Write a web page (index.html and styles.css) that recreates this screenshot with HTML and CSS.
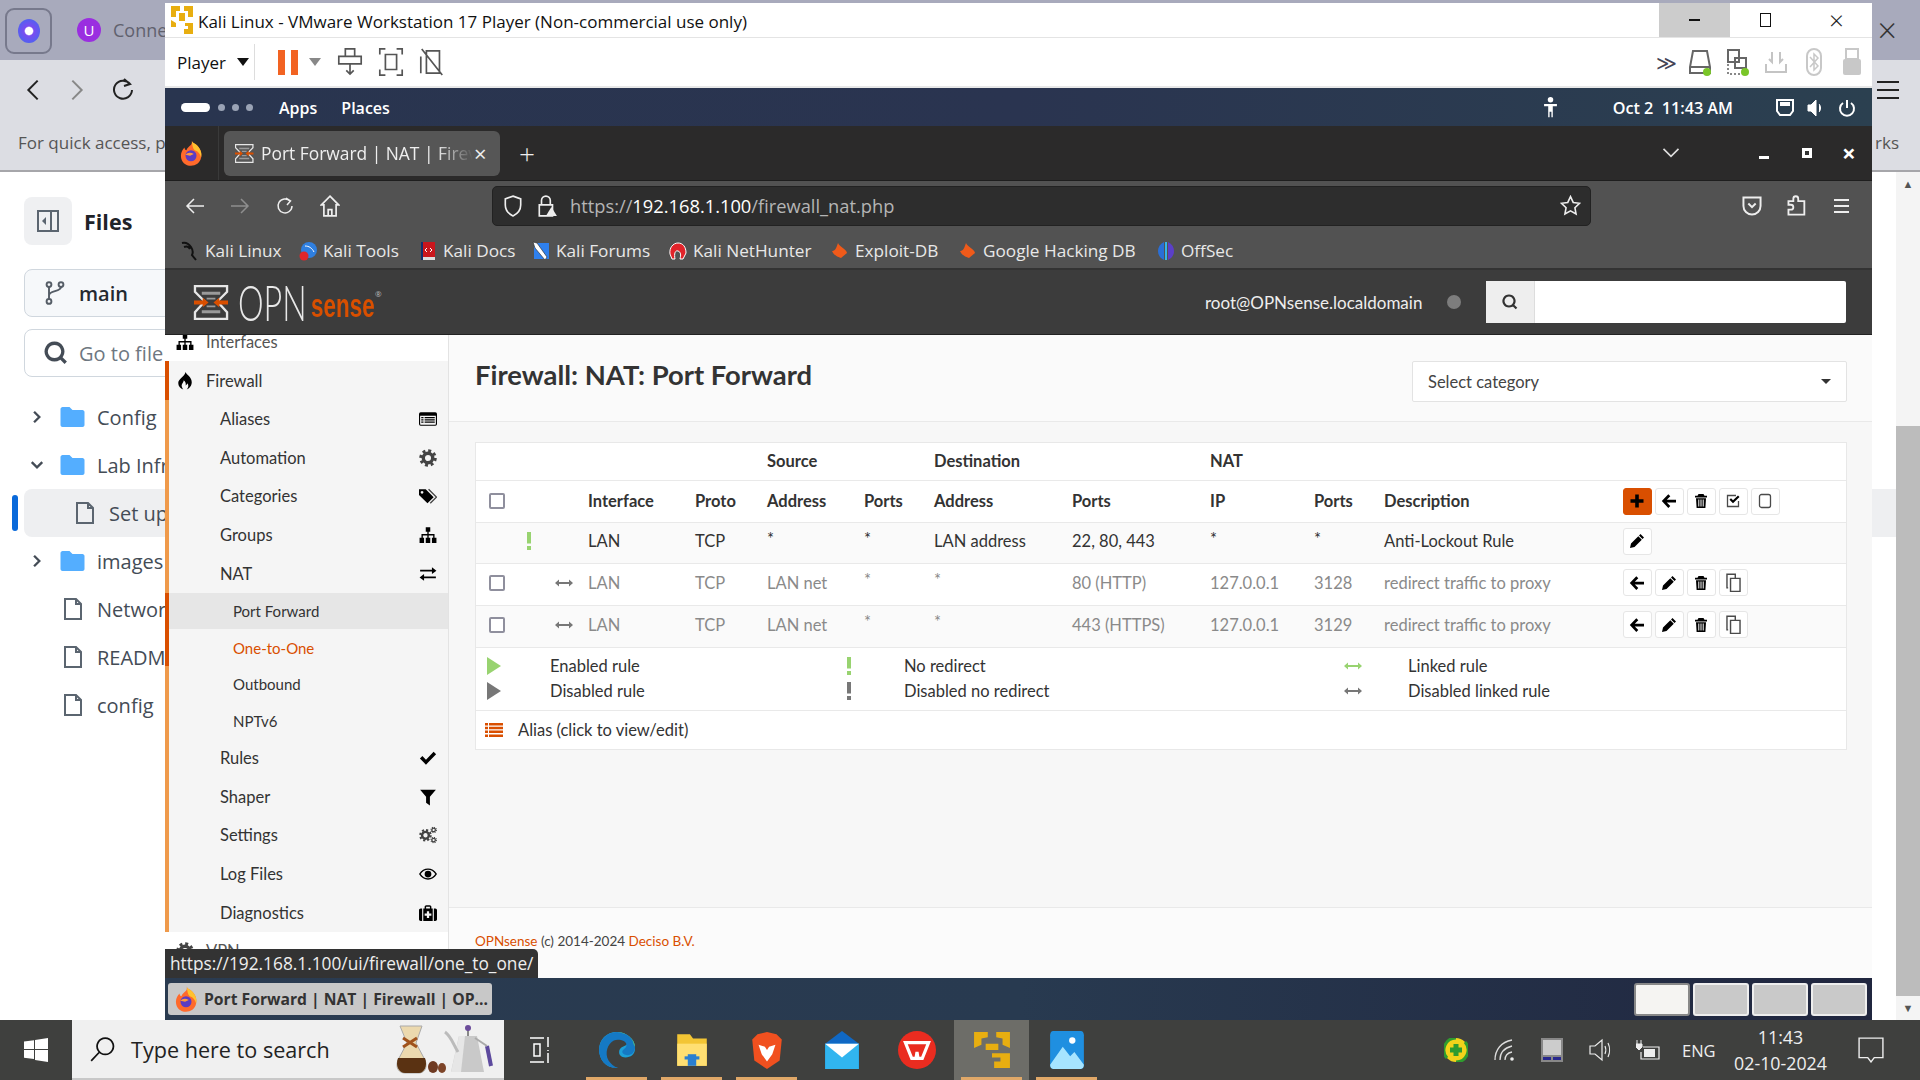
FILE: index.html
```html
<!DOCTYPE html>
<html lang="en">
<head>
    <meta charset="UTF-8">
    <title>Kali Linux - VMware Workstation 17 Player</title>
    <link rel="stylesheet" href="styles.css">
</head>
<body>
<svg class="sprite" xmlns="http://www.w3.org/2000/svg">
    <symbol id="i-sitemap" viewBox="0 0 16 16"><path d="M6 1h4v4H8.600v2.200h5.200v3.300H15.500V15h-4v-4.500h1.100V8.400H8.600v2.100H10V15H6v-4.500h1.400V8.400H3.400v2.100h1.100V15h-4v-4.500h1.700V7.200h5.200V5H6z"/></symbol>
    <symbol id="i-fire" viewBox="0 0 16 16"><path fill-rule="evenodd" d="M8.500 0c.6 2.300 5.500 4.200 5.500 9 0 3.200-2.200 5.600-4.500 6.500 1.600-1.500 2-3.500.6-5.400-.2 1-.8 1.500-1.500 1.800.4-1.800-.3-3.500-1.800-4.500.2 2-2.300 3.300-1.600 5.700.2.900.7 1.700 1.300 2.400C3.700 14.600 2 12.500 2 9.800 2 6 7.500 4.500 8.500 0z"/></symbol>
    <symbol id="i-gear" viewBox="0 0 16 16"><circle cx="8" cy="8" r="4.200" fill="none" stroke="currentColor" stroke-width="3"/><circle cx="8" cy="8" r="6.500" fill="none" stroke="currentColor" stroke-width="2.600" stroke-dasharray="2.600 2.500"/></symbol>
    <symbol id="i-tags" viewBox="0 0 16 16"><path fill-rule="evenodd" d="M0 2h6l7 7-5.500 5.500L0 7z M2.700 3.500a1.200 1.200 0 1 0 .01 0z"/><path d="M8.500 2l7 7-5.500 5.500" fill="none" stroke="currentColor" stroke-width="1.200"/></symbol>
    <symbol id="i-listalt" viewBox="0 0 16 16"><path fill-rule="evenodd" d="M1.500 2h13A1.500 1.500 0 0 1 16 3.500v9a1.500 1.500 0 0 1-1.500 1.500h-13A1.500 1.500 0 0 1 0 12.500v-9A1.500 1.500 0 0 1 1.500 2z M1 5v7.500c0 .3.2.5.500.5h13c.3 0 .5-.2.5-.5V5z"/><path d="M2 6.300h2v1H2zM5 6.300h9v1H5zM2 8.300h2v1H2zM5 8.300h9v1H5zM2 10.300h2v1H2zM5 10.300h9v1H5z"/></symbol>
    <symbol id="i-exchange" viewBox="0 0 16 16"><path d="M1 4.300h10.500V2L15.500 5l-4 3V5.800H1z M15 10.200H4.500V8L.5 11l4 3v-2.300H15z"/></symbol>
    <symbol id="i-check" viewBox="0 0 16 16"><path d="M.8 8.500l2.200-2.200 3.200 3.200 6.800-7 2.200 2.200-9 9.200z"/></symbol>
    <symbol id="i-filter" viewBox="0 0 16 16"><path d="M1 1.500h14l-5.300 6.200v7.800l-3.400-2.500V7.700z"/></symbol>
    <symbol id="i-cogs" viewBox="0 0 16 16"><use href="#i-gear" x="0" y="2.500" width="11.500" height="11.500"/><use href="#i-gear" x="10" y="0.500" width="6" height="6"/><use href="#i-gear" x="10" y="9.500" width="6" height="6"/></symbol>
    <symbol id="i-eye" viewBox="0 0 16 16"><path fill-rule="evenodd" d="M0 8c2-3.500 5-5 8-5s6 1.500 8 5c-2 3.500-5 5-8 5s-6-1.500-8-5z M1.500 8c1.500 2.500 4 3.800 6.500 3.800S13 10.500 14.500 8C13 5.500 10.500 4.200 8 4.200S3 5.500 1.500 8z"/><circle cx="8" cy="8" r="3"/></symbol>
    <symbol id="i-medkit" viewBox="0 0 16 16"><path fill-rule="evenodd" d="M5 4V2.500C5 1.700 5.700 1 6.500 1h3c.8 0 1.500.7 1.500 1.500V4h3.500c.8 0 1.500.7 1.500 1.500v8c0 .8-.7 1.500-1.500 1.500h-13C.7 15 0 14.300 0 13.500v-8C0 4.700.7 4 1.500 4z M6.300 4h3.400V2.400H6.300z M2.800 4v11h1V4z M12.200 4v11h1V4z M7 6.500v2H5v2h2v2h2v-2h2v-2H9v-2z"/></symbol>
    <symbol id="i-left" viewBox="0 0 16 16"><path d="M7.300 1.300l2 2L5.800 6.700H15v2.800H5.800l3.500 3.400-2 2L.8 8.100z"/></symbol>
    <symbol id="i-trash" viewBox="0 0 16 16"><path fill-rule="evenodd" d="M5.500 1h5l1 1.800h2.500V4.500H2V2.800h2.500z M3 5.300h10l-.6 9.700H3.600z M5.300 6.500v7h1v-7z M7.500 6.500v7h1v-7z M9.700 6.500v7h1v-7z"/></symbol>
    <symbol id="i-pencil" viewBox="0 0 16 16"><path d="M11.500 1l3.500 3.500-1.500 1.500L10 2.500z M9.300 3.200l3.500 3.500-7.300 7.300L1 15l1-4.500z"/></symbol>
    <symbol id="i-copy" viewBox="0 0 16 16"><path d="M5.500 4.500h8v11h-8zM3.500 12.500H2.500V1h7v3.500" fill="none" stroke="currentColor" stroke-width="1.200"/></symbol>
    <symbol id="i-plus" viewBox="0 0 16 16"><path d="M6.200 1.500h3.600v4.700h4.700v3.600H9.800v4.700H6.200V9.800H1.500V6.200h4.700z"/></symbol>
    <symbol id="i-checksq" viewBox="0 0 16 16"><path d="M13.500 8v5.500h-11v-11H11" fill="none" stroke="currentColor" stroke-width="1.300"/><path d="M4.500 6.800l1.500-1.500 2 2L13 2.500l1.500 1.500L8 10.300z"/></symbol>
    <symbol id="i-square" viewBox="0 0 16 16"><rect x="2.500" y="1.500" width="11" height="13" rx="2" fill="none" stroke="currentColor" stroke-width="1.300"/></symbol>
    <symbol id="i-both" viewBox="0 0 18 10"><path d="M0 5l4-3.500v2.500h10V1.500L18 5l-4 3.500V6H4v2.500z"/></symbol>
    <symbol id="i-bang" viewBox="0 0 6 18"><path d="M1 0h4v11.500H1zM1 14h4v4H1z"/></symbol>
    <symbol id="i-play" viewBox="0 0 14 18"><path d="M0 0l14 9L0 18z"/></symbol>
    <symbol id="i-alias" viewBox="0 0 18 16"><path d="M0 1h3v2.500H0zM4 1h14v2.500H4zM0 4.800h3v2.500H0zM4 4.800h14v2.500H4zM0 8.600h3v2.500H0zM4 8.600h14v2.500H4zM0 12.400h3v2.500H0zM4 12.400h14v2.500H4z"/></symbol>
    <symbol id="i-search" viewBox="0 0 16 16"><path d="M7 1.500a5.500 5.500 0 1 1-.01 0zM10.700 10.700L14.500 14.500" fill="none" stroke="currentColor" stroke-width="2.200"/></symbol>
    <symbol id="i-file" viewBox="0 0 20 24"><path d="M2 2h11l5 5v15H2zM13 2v5h5" fill="none" stroke="currentColor" stroke-width="2"/></symbol>
    <symbol id="i-folder" viewBox="0 0 24 20"><path d="M2 0h7l3 3h10c1 0 2 1 2 2v13c0 1-1 2-2 2H2c-1 0-2-1-2-2V2C0 1 1 0 2 0z"/></symbol>
    <symbol id="i-chevron" viewBox="0 0 12 12"><path d="M3.500 1.500L8 6l-4.500 4.500" fill="none" stroke="currentColor" stroke-width="2"/></symbol>
    <symbol id="i-opn" viewBox="0 0 36 36"><path d="M1 1h33v6L24 17l10 11v7H1v-7l10-11L1 7z" fill="none" stroke="#e6e6e6" stroke-width="2.400"/><path d="M8 7h19v3H8zM13 13h9v2H13zM13 21h9v2H13zM8 26h19v3H8z" fill="#9a9a9a"/><path d="M0 16h9v-3l6 5-6 5v-3H0zM35 16h-9v-3l-6 5 6 5v-3h9z" fill="#d94f00"/></symbol>
    <symbol id="i-ffox" viewBox="0 0 24 28"><path d="M13 0c0 3 3 3 6 6 4 4 5 9 4 13-1 6-6 9-11 9C6 28 1 24 1 17c0-4 2-7 4-9 0 2 1 3 2 3 1-3 3-4 5-6 1-1 1-3 1-5z" fill="#ff6a2b"/><path d="M13 0c0 3 3 3 6 6 4 4 5 9 4 13-1-4-3-7-7-8-2-2-3-6-3-11z" fill="#ffc22e"/><circle cx="12" cy="17" r="6" fill="#5b3cc4"/><path d="M6 16c2-3 6-3 9-1l-4 2z" fill="#ff9a3c"/></symbol>
</svg>

<div class="desktop">
    <div class="screen">

        <!-- browser behind the vm -->
        <div class="host-browser">
            <div class="host-tabs">
                <span class="host-app"><span class="host-app-dot"></span></span>
                <span class="host-ext">U</span>
                <span class="host-tabname">Conne</span>
                <span class="host-close">×</span>
            </div>
            <div class="host-tools">
                <div class="host-nav">
                    <svg class="host-arrow flip" viewBox="0 0 12 18"><path d="M2 1l8 8-8 8"/></svg>
                    <svg class="host-arrow muted" viewBox="0 0 12 18"><path d="M2 1l8 8-8 8"/></svg>
                    <svg class="host-reload" viewBox="0 0 22 24"><path d="M18 6a9 9 0 1 0 2 6M12 1l6 5-6 2"/></svg>
                    <span class="host-burger"></span>
                </div>
                <div class="host-hint"><span>For quick access, p</span><span class="host-rks">rks</span></div>
            </div>
            <div class="host-page">
                <div class="tree">
                    <div class="tree-head">
                        <span class="tree-toggle"><svg class="tree-toggle-in" viewBox="0 0 24 24"><path d="M2 2h20v20H2zM15 2v20" fill="none" stroke="#5b6570" stroke-width="2"/><path d="M10 8v8l-4-4z" fill="#5b6570"/></svg></span>
                        <span class="tree-title">Files</span>
                    </div>
                    <div class="tree-box tree-branch"><svg class="branch-ic" viewBox="0 0 16 20"><circle cx="3" cy="3" r="2"/><circle cx="3" cy="17" r="2"/><circle cx="13" cy="3" r="2"/><path d="M3 5v10M13 5c0 4-10 3-10 7"/></svg>main</div>
                    <div class="tree-box tree-find"><svg class="find-ic"><use href="#i-search"/></svg>Go to file</div>
                    <ul class="tree-list">
                        <li class="tree-row"><svg class="tree-chev"><use href="#i-chevron"/></svg><svg class="tree-folder"><use href="#i-folder"/></svg>Config</li>
                        <li class="tree-row"><svg class="tree-chev down"><use href="#i-chevron"/></svg><svg class="tree-folder"><use href="#i-folder"/></svg>Lab Infra</li>
                        <li class="tree-row tree-current"><svg class="tree-file"><use href="#i-file"/></svg>Set up</li>
                        <li class="tree-row"><svg class="tree-chev"><use href="#i-chevron"/></svg><svg class="tree-folder"><use href="#i-folder"/></svg>images</li>
                        <li class="tree-row tree-plain"><svg class="tree-file"><use href="#i-file"/></svg>Network</li>
                        <li class="tree-row tree-plain"><svg class="tree-file"><use href="#i-file"/></svg>README</li>
                        <li class="tree-row tree-plain"><svg class="tree-file"><use href="#i-file"/></svg>config</li>
                    </ul>
                </div>
                <div class="host-scroll">
                    <span class="sb-arrow">▲</span>
                    <span class="sb-thumb"></span>
                    <span class="sb-arrow">▼</span>
                </div>
            </div>
        </div>

        <!-- vmware player -->
        <div class="vm">
            <div class="vm-title">
                <svg class="vm-logo" viewBox="0 0 24 30"><path d="M1 1h9v5H6v6H1zM14 1h9v11h-5V6h-4zM9 8h6v8H9zM1 15l5 3v4H1zM15 18h8v11h-9v-5h4v-3h-3z" fill="#e8ae10"/></svg>
                <span class="vm-name">Kali Linux - VMware Workstation 17 Player (Non-commercial use only)</span>
                <span class="vm-btn vm-min"><span class="vm-dash"></span></span>
                <span class="vm-btn"><span class="vm-box"></span></span>
                <span class="vm-btn vm-x">×</span>
            </div>
            <div class="vm-tools">
                <span class="vm-player">Player</span><span class="vm-caret"></span>
                <span class="vm-div"></span>
                <span class="vm-pause"></span><span class="vm-caret grey"></span>
                <svg class="vm-ic" viewBox="0 0 26 30"><path d="M8 1h10v8H8zM1 9h24v8H1zM13 17v11M9 24l4 4 4-4"/></svg>
                <svg class="vm-ic" viewBox="0 0 26 30"><path d="M1 7V1h6M19 1h6v6M1 23v6h6M25 23v6h-6M7 7h12v16H7z"/></svg>
                <svg class="vm-ic" viewBox="0 0 26 30"><path d="M7 3h14v24H7zM2 1l22 28M1 9v18"/></svg>
                <span class="vm-spacer"></span>
                <span class="vm-more">≫</span>
                <svg class="vm-dev" viewBox="0 0 24 28"><path d="M5 3h14l3 16v6H2v-6zM2 19h20" fill="none" stroke="#666" stroke-width="2"/><circle cx="19" cy="24" r="4" fill="#7ac629"/></svg>
                <svg class="vm-dev" viewBox="0 0 24 28"><path d="M2 2h11v12H2zM9 10h11v10H9z" fill="#fff" stroke="#666" stroke-width="2"/><path d="M2 16v10h14" fill="none" stroke="#888" stroke-dasharray="2 2" stroke-width="2"/><circle cx="19" cy="24" r="4" fill="#7ac629"/></svg>
                <svg class="vm-dev" viewBox="0 0 24 28"><path d="M2 16v8h20v-8M8 4v10l-3-3M16 4v10l3-3" fill="none" stroke="#c4c4c4" stroke-width="2"/></svg>
                <svg class="vm-dev" viewBox="0 0 24 28"><rect x="5" y="1" width="14" height="26" rx="7" fill="none" stroke="#c8c8c8" stroke-width="2"/><path d="M8 9l8 9-4 4V6l4 4-8 9" fill="none" stroke="#c8c8c8" stroke-width="1.500"/></svg>
                <svg class="vm-dev" viewBox="0 0 24 28"><path d="M6 1h12v10H6z" fill="none" stroke="#c8c8c8" stroke-width="2"/><rect x="3" y="11" width="18" height="16" rx="2" fill="#c8c8c8"/></svg>
            </div>

            <div class="kali-top">
                <span class="kali-pill"></span><span class="kali-dot"></span><span class="kali-dot"></span><span class="kali-dot"></span>
                <span class="kali-menu">Apps</span><span class="kali-menu">Places</span>
                <span class="kali-spacer"></span>
                <svg class="kali-person" viewBox="0 0 16 24"><circle cx="8" cy="3" r="3"/><path d="M1 7.500h14v2.500h-4.500v12H9v-6H7v6H5.500V10H1z"/></svg>
                <span class="kali-clock">Oct 2&nbsp; 11:43 AM</span>
                <svg class="kali-ic" viewBox="0 0 18 18"><path d="M1 1h16v11l-3 4H4l-3-4z" fill="none" stroke="#fff" stroke-width="2"/><path d="M4 3h10v4H4z" fill="#fff"/></svg>
                <svg class="kali-ic" viewBox="0 0 18 18"><path d="M1 6h3l5-5v16l-5-5H1zM12 5c2 2 2 6 0 8" fill="#fff" stroke="#fff"/></svg>
                <svg class="kali-ic" viewBox="0 0 18 18"><path d="M5 4a7 7 0 1 0 8 0M9 1v8" fill="none" stroke="#fff" stroke-width="2"/></svg>
            </div>

            <div class="ff">
                <div class="ff-tabs">
                    <svg class="ff-logo"><use href="#i-ffox"/></svg>
                    <span class="ff-sep"></span>
                    <div class="ff-tab">
                        <svg class="ff-favicon"><use href="#i-opn"/></svg>
                        <span class="ff-tabtext">Port Forward | NAT | Firev</span>
                        <span class="ff-tabx">×</span>
                    </div>
                    <span class="ff-new">+</span>
                    <span class="ff-spacer"></span>
                    <svg class="ff-chev" viewBox="0 0 12 12"><path d="M3.500 1.500L8 6l-4.500 4.500" fill="none" stroke="#ddd" stroke-width="1"/></svg>
                    <span class="ff-wc ff-wmin"></span>
                    <span class="ff-wc ff-wmax"></span>
                    <span class="ff-wc ff-wx">×</span>
                </div>
                <div class="ff-nav">
                    <svg class="ff-btn" viewBox="0 0 20 18"><path d="M19 9H2M9 2L2 9l7 7" fill="none" stroke="#eee" stroke-width="1.500"/></svg>
                    <svg class="ff-btn" viewBox="0 0 20 18"><path d="M1 9h17M11 2l7 7-7 7" fill="none" stroke="#8e8e8e" stroke-width="1.500"/></svg>
                    <svg class="ff-btn" viewBox="0 0 20 18"><path d="M15 4a7 7 0 1 0 2 5M11 1l4.500 3L12 8" fill="none" stroke="#eee" stroke-width="1.500"/></svg>
                    <svg class="ff-home" viewBox="0 0 16 18"><path d="M8 1l7 7h-2v9H3V8H1zM6.500 17v-5h3v5" fill="none" stroke="#eee" stroke-width="1.400"/></svg>
                    <div class="ff-url">
                        <svg class="ff-shield" viewBox="0 0 16 20"><path d="M8 1l7 2.500V9c0 4.500-3 8-7 10-4-2-7-5.500-7-10V3.500z" fill="none" stroke="#eee" stroke-width="1.500"/></svg>
                        <svg class="ff-lock" viewBox="0 0 18 20"><path d="M4 9V5a4 4 0 0 1 8 0v4M2 9h12v10H2z" fill="none" stroke="#eee" stroke-width="1.500"/><path d="M13 11l5 8h-10z" fill="#eee"/></svg>
                        <span class="ff-addr"><span class="ff-addr-dim">https://</span>192.168.1.100<span class="ff-addr-dim">/firewall_nat.php</span></span>
                        <svg class="ff-star" viewBox="0 0 20 20"><path d="M10 1.500l2.600 5.600 6 .8-4.400 4.200 1.100 6-5.300-3-5.300 3 1.100-6L1.400 7.900l6-.8z" fill="none" stroke="#eee" stroke-width="1.500"/></svg>
                    </div>
                    <svg class="ff-tool" viewBox="0 0 18 18"><path d="M2 2h14v7a7 7 0 0 1-14 0zM6 7l3 3 3-3" fill="none" stroke="#eee" stroke-width="1.600"/></svg>
                    <svg class="ff-tool" viewBox="0 0 18 18"><path d="M2 5h4V3a2 2 0 0 1 4 0v2h5v11H2v-4h2a2 2 0 0 0 0-4H2z" fill="none" stroke="#eee" stroke-width="1.500"/></svg>
                    <span class="ff-burger"></span>
                </div>
                <div class="ff-marks">
                    <span class="mark"><svg class="mark-ic" viewBox="0 0 18 20"><path d="M1 2c4-1 7 1 9 4 2 3 2 6 1 8l4 5M3 6c3-1 5 0 6 2" fill="none" stroke="#111" stroke-width="2"/></svg>Kali Linux</span>
                    <span class="mark"><svg class="mark-ic" viewBox="0 0 18 20"><circle cx="10" cy="9" r="8" fill="#2f7fe0"/><circle cx="5" cy="15" r="4.500" fill="#e0262a"/><path d="M6 5c4 0 7 2 9 6" fill="none" stroke="#fff"/></svg>Kali Tools</span>
                    <span class="mark"><svg class="mark-ic" viewBox="0 0 18 20"><path d="M2 1h14v17H2z" fill="#c9161d"/><path d="M2 16h14v3H2z" fill="#ddd"/><path d="M2 1h2v18H2z" fill="#14306e"/><path d="M8 7l-2 2 2 2M11 7l2 2-2 2" fill="none" stroke="#fff"/></svg>Kali Docs</span>
                    <span class="mark"><svg class="mark-ic" viewBox="0 0 18 20"><path d="M2 2h15v16H2z" fill="#2f80ed"/><path d="M1 1l4 1 10 14-2 3L3 7z" fill="#fff" stroke="#222" stroke-width=".6"/></svg>Kali Forums</span>
                    <span class="mark"><svg class="mark-ic" viewBox="0 0 18 20"><path d="M9 2c5 0 8 4 8 10l-3 6h-3c1-4 1-7-2-8s-4 3-3 8H3L1 13C0 7 4 2 9 2z" fill="#e2232a" stroke="#fff"/></svg>Kali NetHunter</span>
                    <span class="mark"><svg class="mark-ic" viewBox="0 0 18 20"><path d="M7 2c1 3 9 7 9 10l-6 5C6 16 2 13 1 10c3 0 4-2 6-8z" fill="#ef5a1a"/></svg>Exploit-DB</span>
                    <span class="mark"><svg class="mark-ic" viewBox="0 0 18 20"><path d="M7 2c1 3 9 7 9 10l-6 5C6 16 2 13 1 10c3 0 4-2 6-8z" fill="#ef5a1a"/></svg>Google Hacking DB</span>
                    <span class="mark"><svg class="mark-ic" viewBox="0 0 18 20"><path d="M7 1C3 3 1 6 1 10s2 7 6 9z" fill="#2a6fd6"/><path d="M8 1h2v18H8z" fill="#35b6e8"/><path d="M11 1c4 2 6 5 6 9s-2 7-6 9z" fill="#5b3fc8"/></svg>OffSec</span>
                </div>

                <div class="opn-head">
                    <div class="opn-logo">
                        <svg class="opn-mark"><use href="#i-opn"/></svg>
                        <span class="opn-word">OPN</span><span class="opn-sense">sense</span><span class="opn-reg">®</span>
                    </div>
                    <span class="opn-user">root@OPNsense.localdomain</span>
                    <span class="opn-dot"></span>
                    <div class="opn-search">
                        <span class="opn-search-ic"><svg class="ic"><use href="#i-search"/></svg></span>
                    </div>
                </div>

                <div class="opn-body">
                    <nav class="side">
                        <a class="side-top side-plain"><svg class="side-ic"><use href="#i-sitemap"/></svg>Interfaces</a>
                        <a class="side-top side-open"><svg class="side-ic"><use href="#i-fire"/></svg>Firewall</a>
                        <a class="side-item">Aliases<svg class="side-end"><use href="#i-listalt"/></svg></a>
                        <a class="side-item">Automation<svg class="side-end"><use href="#i-gear"/></svg></a>
                        <a class="side-item">Categories<svg class="side-end"><use href="#i-tags"/></svg></a>
                        <a class="side-item">Groups<svg class="side-end"><use href="#i-sitemap"/></svg></a>
                        <a class="side-item">NAT<svg class="side-end"><use href="#i-exchange"/></svg></a>
                        <a class="side-sub side-active">Port Forward</a>
                        <a class="side-sub side-hover">One-to-One</a>
                        <a class="side-sub">Outbound</a>
                        <a class="side-sub">NPTv6</a>
                        <a class="side-item">Rules<svg class="side-end"><use href="#i-check"/></svg></a>
                        <a class="side-item">Shaper<svg class="side-end"><use href="#i-filter"/></svg></a>
                        <a class="side-item">Settings<svg class="side-end"><use href="#i-cogs"/></svg></a>
                        <a class="side-item">Log Files<svg class="side-end"><use href="#i-eye"/></svg></a>
                        <a class="side-item">Diagnostics<svg class="side-end"><use href="#i-medkit"/></svg></a>
                        <a class="side-top side-plain"><svg class="side-ic"><use href="#i-gear"/></svg>VPN</a>
                    </nav>

                    <main class="page">
                        <header class="page-head">
                            <h1 class="page-title">Firewall: NAT: Port Forward</h1>
                            <div class="page-select">Select category<span class="select-caret"></span></div>
                        </header>
                        <section class="page-content">
                            <div class="panel">
                                <table class="rules">
                                    <colgroup>
                                        <col class="c-check"><col class="c-status"><col class="c-if"><col class="c-proto"><col class="c-saddr"><col class="c-sport"><col class="c-daddr"><col class="c-dport"><col class="c-ip"><col class="c-nport"><col class="c-desc"><col class="c-act">
                                    </colgroup>
                                    <thead>
                                        <tr class="r-group">
                                            <th colspan="4"></th><th colspan="2">Source</th><th colspan="2">Destination</th><th colspan="2">NAT</th><th colspan="2"></th>
                                        </tr>
                                        <tr class="r-head">
                                            <th><span class="cb"></span></th><th></th><th>Interface</th><th>Proto</th><th>Address</th><th>Ports</th><th>Address</th><th>Ports</th><th>IP</th><th>Ports</th><th>Description</th>
                                            <th><div class="acts">
                                                <span class="act act-add"><svg class="ic"><use href="#i-plus"/></svg></span>
                                                <span class="act"><svg class="ic"><use href="#i-left"/></svg></span>
                                                <span class="act"><svg class="ic ic-s"><use href="#i-trash"/></svg></span>
                                                <span class="act"><svg class="ic ic-s"><use href="#i-checksq"/></svg></span>
                                                <span class="act"><svg class="ic ic-s"><use href="#i-square"/></svg></span>
                                            </div></th>
                                        </tr>
                                    </thead>
                                    <tbody>
                                        <tr class="r-row r-stripe r-first">
                                            <td></td><td><svg class="bang bang-on"><use href="#i-bang"/></svg></td><td>LAN</td><td>TCP</td><td class="star">*</td><td class="star">*</td><td>LAN address</td><td>22, 80, 443</td><td class="star">*</td><td class="star">*</td><td>Anti-Lockout Rule</td>
                                            <td><div class="acts"><span class="act"><svg class="ic ic-s"><use href="#i-pencil"/></svg></span></div></td>
                                        </tr>
                                        <tr class="r-row r-off">
                                            <td><span class="cb"></span></td><td><svg class="both"><use href="#i-both"/></svg></td><td>LAN</td><td>TCP</td><td>LAN net</td><td class="star">*</td><td class="star">*</td><td>80 (HTTP)</td><td>127.0.0.1</td><td>3128</td><td>redirect traffic to proxy</td>
                                            <td><div class="acts">
                                                <span class="act"><svg class="ic"><use href="#i-left"/></svg></span>
                                                <span class="act"><svg class="ic ic-s"><use href="#i-pencil"/></svg></span>
                                                <span class="act"><svg class="ic ic-s"><use href="#i-trash"/></svg></span>
                                                <span class="act"><svg class="ic ic-c"><use href="#i-copy"/></svg></span>
                                            </div></td>
                                        </tr>
                                        <tr class="r-row r-off r-stripe">
                                            <td><span class="cb"></span></td><td><svg class="both"><use href="#i-both"/></svg></td><td>LAN</td><td>TCP</td><td>LAN net</td><td class="star">*</td><td class="star">*</td><td>443 (HTTPS)</td><td>127.0.0.1</td><td>3129</td><td>redirect traffic to proxy</td>
                                            <td><div class="acts">
                                                <span class="act"><svg class="ic"><use href="#i-left"/></svg></span>
                                                <span class="act"><svg class="ic ic-s"><use href="#i-pencil"/></svg></span>
                                                <span class="act"><svg class="ic ic-s"><use href="#i-trash"/></svg></span>
                                                <span class="act"><svg class="ic ic-c"><use href="#i-copy"/></svg></span>
                                            </div></td>
                                        </tr>
                                    </tbody>
                                </table>
                                <div class="legend">
                                    <svg class="play play-on"><use href="#i-play"/></svg><span>Enabled rule</span>
                                    <svg class="bang bang-on"><use href="#i-bang"/></svg><span>No redirect</span>
                                    <svg class="both both-on"><use href="#i-both"/></svg><span>Linked rule</span>
                                    <svg class="play"><use href="#i-play"/></svg><span>Disabled rule</span>
                                    <svg class="bang"><use href="#i-bang"/></svg><span>Disabled no redirect</span>
                                    <svg class="both"><use href="#i-both"/></svg><span>Disabled linked rule</span>
                                </div>
                                <div class="alias-row"><svg class="alias-ic"><use href="#i-alias"/></svg>Alias (click to view/edit)</div>
                            </div>
                        </section>
                        <footer class="page-foot"><a class="foot-link">OPNsense</a> (c) 2014-2024 <a class="foot-link">Deciso B.V.</a></footer>
                    </main>
                </div>
                <div class="ff-status">https://192.168.1.100/ui/firewall/one_to_one/</div>
            </div>

            <div class="kali-bottom">
                <div class="kali-task"><svg class="kali-task-ic"><use href="#i-ffox"/></svg>Port Forward | NAT | Firewall | OP...</div>
                <div class="kali-ws">
                    <span class="ws ws-on"></span><span class="ws"></span><span class="ws"></span><span class="ws"></span>
                </div>
            </div>
        </div>
    </div>

    <!-- windows taskbar -->
    <div class="taskbar">
        <span class="tb-start"><svg class="tb-win" viewBox="0 0 24 24"><path d="M0 3.500l10-1.300V11H0zM11 2l13-2v11H11zM0 12h10v9L0 19.700zM11 12h13v12l-13-2z"/></svg></span>
        <div class="tb-search">
            <svg class="tb-lens" viewBox="0 0 24 24"><path d="M15 2a7.500 7.500 0 1 1-.01 0zM9.500 15L2 23" fill="none" stroke="#111" stroke-width="1.600"/></svg>
            <span class="tb-search-text">Type here to search</span>
            <svg class="tb-art" viewBox="0 0 100 50"><path d="M5 2h22l-6 17 9 17c3 8-1 13-6 13H10c-6 0-10-5-7-13l9-17z" fill="#ecd9ae" stroke="#aaa"/><path d="M3 34h27c3 8-1 15-6 15H10c-6 0-10-7-7-15z" fill="#5a3212"/><path d="M8 14l14 9M22 14L8 23" stroke="#a0521c" stroke-width="3"/><ellipse cx="38" cy="43" rx="5" ry="6" fill="#6e3a22"/><ellipse cx="47" cy="44" rx="4" ry="5" fill="#7d4428"/><path d="M64 12h18l7 36H56z" fill="#c9c9c9"/><path d="M64 12h6l-4 36H56z" fill="#e6e6e6"/><path d="M63 28C58 20 56 12 50 8" fill="none" stroke="#bbb" stroke-width="3"/><path d="M73 4v8" stroke="#888" stroke-width="2"/><circle cx="73" cy="4" r="3" fill="#6b4c9a"/><path d="M92 22l4 20" stroke="#5d4a9e" stroke-width="4"/><path d="M80 14l12 8" stroke="#aaa" stroke-width="2"/></svg>
        </div>
        <svg class="tb-view" viewBox="0 0 24 28"><path d="M1 2h14M1 26h14M5 8h6v12H5zM19 1v10M19 17v10M19 14v1" fill="none" stroke="#fff" stroke-width="1.500"/></svg>
        <div class="tb-apps">
            <span class="tb-app tb-run"><svg class="tb-ic" viewBox="0 0 36 36"><path d="M18 1c10 0 17 8 17 16 0 5-4 8-9 8-4 0-6-2-6-5 0-6 8-5 8-9 0-3-5-6-10-6C9 5 3 11 3 18c0 9 7 17 16 17-11 1-18-8-18-17C1 8 8 1 18 1z" fill="#1da0d8"/><path d="M1 18c0-9 7-17 17-17 8 0 17 6 17 14 0 5-3 8-7 8-3 0-5-2-5-3 0-3 4-3 4-7S19 7 15 9c-6 3-9 12-5 19 2 3 5 6 9 7C8 36 1 27 1 18z" fill="#1579c4"/><path d="M35 15c0-7-8-14-17-14 9 1 15 5 16 12z" fill="#5fd07a"/></svg></span>
            <span class="tb-app tb-run"><svg class="tb-ic" viewBox="0 0 36 36"><path d="M4 3h12l3 4h13v26H4z" fill="#f3c534"/><path d="M4 12h28v21H4z" fill="#ffdf72"/><path d="M14 22h8v11h-8z" fill="#2a7fd0"/><path d="M11 24h14v3H11z" fill="#2a7fd0"/></svg></span>
            <span class="tb-app tb-run"><svg class="tb-ic" viewBox="0 0 36 36"><path d="M18 1l9 2 5 5-2 20-12 8-12-8L4 8l5-5z" fill="#f1501f"/><path d="M10 13l6 2 2 3 2-3 6-2-3 9-5 7-5-7z" fill="#fff"/></svg></span>
            <span class="tb-app"><svg class="tb-ic" viewBox="0 0 36 36"><path d="M18 0L2 12v24h32V12z" fill="#1068c4"/><path d="M2 12h32v24H2z" fill="#31b5ef"/><path d="M2 12l16 13 16-13z" fill="#fff"/></svg></span>
            <span class="tb-app"><svg class="tb-ic" viewBox="0 0 36 36"><circle cx="18" cy="18" r="18" fill="#ea2c20"/><path d="M7 11h22l-6 15h-4l-1-6-1 6h-4z" fill="none" stroke="#fff" stroke-width="3"/></svg></span>
            <span class="tb-app tb-vmw tb-run"><svg class="tb-ic" viewBox="0 0 36 36"><path d="M1 1h13v5l-6 1v6l-7 3zM22 1h13v15l-7-3V7l-6-1zM12 12h12v6H12zM18 21h17v14H20v-6h6v-4h-8z" fill="#e8ae10"/></svg></span>
            <span class="tb-app tb-run"><svg class="tb-ic" viewBox="0 0 36 36"><path d="M5 0h26c2 0 3 2 3 4v28c0 2-1 4-3 4H5c-2 0-3-2-3-4V4c0-2 1-4 3-4z" fill="#1f8fe0"/><path d="M2 32l12-17 7 9 4-4 9 12c0 2-1 4-3 4H5c-2 0-3-2-3-4z" fill="#a6e4ff"/><circle cx="23" cy="9" r="3" fill="#fff"/></svg></span>
        </div>
        <div class="tray">
            <svg class="tray-ic" viewBox="0 0 24 24"><circle cx="12" cy="12" r="12" fill="#f2d31b"/><path d="M12 0a12 12 0 0 0-9 20M12 24a12 12 0 0 0 9-20" fill="none" stroke="#2f9b2f" stroke-width="3"/><path d="M9.500 6h5v3.500H18v5h-3.500V18h-5v-3.500H6v-5h3.500z" fill="#2f9b2f"/></svg>
            <svg class="tray-ic" viewBox="0 0 24 24"><path d="M3 22C3 12 9 4 20 2M8 22c0-7 4-12 12-14M13 22c0-4 2-7 7-8" fill="none" stroke="#ddd" stroke-width="1.300"/><circle cx="20" cy="21" r="1.800" fill="#eee"/></svg>
            <svg class="tray-ic" viewBox="0 0 24 24"><path d="M1 0h22v24H1z" fill="#888"/><path d="M3 2h18v15H3z" fill="#ccc"/><path d="M3 19h8v3H3zM13 19h8v3h-8z" fill="#28288e"/></svg>
            <svg class="tray-ic" viewBox="0 0 24 24"><path d="M2 8h5l7-6v20l-7-6H2zM17 8c1 2 1 6 0 8M20 5c2 4 2 10 0 14" fill="none" stroke="#eee" stroke-width="1.200"/></svg>
            <svg class="tray-ic" viewBox="0 0 24 24"><path d="M7 9h16v12H5V14" fill="none" stroke="#eee" stroke-width="1.200"/><path d="M8 11h11v8H8z" fill="#eee"/><path d="M1 2v4M5 2v4M0 6h6v3l-3 3-3-3z" fill="#eee" stroke="#eee"/></svg>
            <span class="tray-lang">ENG</span>
            <span class="tray-clock"><span>11:43</span><span>02-10-2024</span></span>
            <svg class="tray-note" viewBox="0 0 24 24"><path d="M1 1h22v18h-8l-3 4-3-4H1z" fill="none" stroke="#eee" stroke-width="1.300"/></svg>
        </div>
    </div>
</div>
</body>
</html>
```

FILE: styles.css
```css
* {
    box-sizing: border-box;
}

html, body {
    margin: 0;
    padding: 0;
    background: #fff;
}

.sprite {
    position: absolute;
    width: 0;
    height: 0;
}

.desktop {
    display: flex;
    flex-direction: column;
    width: 1920px;
    height: 1080px;
    overflow: hidden;
    font-family: "Open Sans", sans-serif;
}

.screen {
    position: relative;
    height: 1020px;
    flex: none;
}

/* host browser */
.host-browser {
    display: flex;
    flex-direction: column;
    height: 1020px;
    color: #444;
}

.host-tabs {
    display: flex;
    align-items: center;
    height: 60px;
    padding-left: 5px;
    background: #a8aabc;
}

.host-app {
    display: flex;
    align-items: center;
    justify-content: center;
    width: 47px;
    height: 46px;
    margin-top: 1px;
    border: 2px solid #77798c;
    border-radius: 9px;
}

.host-app-dot {
    width: 22px;
    height: 24px;
    border-radius: 50%;
    background: radial-gradient(circle, #fff 0 22%, #7a4cf0 30%, #3a6cf0 100%);
}

.host-ext {
    width: 24px;
    height: 24px;
    margin-left: 25px;
    border-radius: 50%;
    background: #9a2ee0;
    color: #fff;
    font-size: 15px;
    line-height: 24px;
    text-align: center;
}

.host-tabname {
    margin-left: 12px;
    font-size: 18px;
    color: #60616e;
}

.host-close {
    margin-left: auto;
    margin-right: 23px;
    font-size: 34px;
    font-weight: 300;
    color: #333;
}

.host-tools {
    height: 112px;
    background: #dcdde3;
    border-bottom: 2px solid #a6a6aa;
}

.host-nav {
    display: flex;
    align-items: center;
    height: 60px;
    padding: 0 21px 0 26px;
}

.host-arrow {
    width: 14px;
    height: 24px;
    margin-right: 30px;
    fill: none;
    stroke: #222;
    stroke-width: 1.700;
}

.host-arrow.flip {
    transform: scaleX(-1);
}

.host-arrow.muted {
    stroke: #888;
}

.host-reload {
    width: 22px;
    height: 24px;
    margin-left: -2px;
    fill: none;
    stroke: #222;
    stroke-width: 2;
}

.host-burger {
    width: 22px;
    height: 18px;
    margin-left: auto;
    border-top: 2px solid #222;
    border-bottom: 2px solid #222;
    background: linear-gradient(#222, #222) center / 100% 2px no-repeat;
}

.host-hint {
    display: flex;
    justify-content: space-between;
    margin-top: 10px;
    padding: 0 24px 0 18px;
    font-size: 17px;
    line-height: 26px;
    color: #555;
}

.host-rks {
    margin-right: -3px;
}

.host-page {
    display: flex;
    flex: 1;
    background: #fff;
}

.tree {
    flex: 1;
    padding: 25px 0 0 24px;
    color: #444c56;
    white-space: nowrap;
}

.tree-head {
    display: flex;
    align-items: center;
    height: 48px;
}

.tree-toggle {
    display: flex;
    align-items: center;
    justify-content: center;
    width: 48px;
    height: 48px;
    border-radius: 8px;
    background: #eff0f2;
}

.tree-toggle-in {
    width: 24px;
    height: 24px;
}

.tree-title {
    margin-left: 12px;
    font-size: 21.500px;
    font-weight: 700;
    color: #1f2328;
}

.tree-box {
    display: flex;
    align-items: center;
    width: 240px;
    height: 48px;
    border: 1px solid #d0d7de;
    border-radius: 8px;
    font-size: 20px;
}

.tree-branch {
    margin-top: 24px;
    padding-left: 20px;
    background: #f6f8fa;
    font-weight: 600;
    color: #24292f;
}

.branch-ic {
    width: 20px;
    height: 24px;
    margin-right: 14px;
    fill: none;
    stroke: #555d66;
    stroke-width: 1.600;
}

.tree-find {
    margin-top: 12px;
    padding-left: 19px;
    color: #6e7781;
}

.find-ic {
    width: 24px;
    height: 24px;
    margin-right: 11px;
    color: #444c56;
}

.tree-list {
    margin: 16px 0 0;
    padding: 0;
    list-style: none;
    font-size: 20px;
}

.tree-row {
    display: flex;
    align-items: center;
    height: 48px;
    padding-left: 6px;
}

.tree-chev {
    width: 14px;
    height: 14px;
    margin-right: 16px;
    color: #444c56;
}

.tree-chev.down {
    transform: rotate(90deg);
}

.tree-folder {
    width: 25px;
    height: 20px;
    margin-right: 12px;
    fill: #54aeff;
}

.tree-file {
    width: 20px;
    height: 24px;
    margin-right: 14px;
    color: #5b6570;
}

.tree-plain {
    padding-left: 39px;
}

.tree-current {
    position: relative;
    padding-left: 51px;
    border-radius: 8px 0 0 8px;
    background: #eeeff1;
}

.tree-current::before {
    content: "";
    position: absolute;
    left: -12px;
    top: 6px;
    width: 6px;
    height: 36px;
    border-radius: 3px;
    background: #0969da;
}

.host-scroll {
    display: flex;
    flex-direction: column;
    width: 24px;
    background: #f4f4f4;
    color: #555;
}

.sb-arrow {
    height: 24px;
    font-size: 11px;
    line-height: 24px;
    text-align: center;
}

.sb-thumb {
    height: 570px;
    margin-top: 230px;
    background: #bcbcbc;
}

/* vmware window */
.vm {
    position: absolute;
    left: 165px;
    top: 3px;
    display: flex;
    flex-direction: column;
    width: 1707px;
    height: 1017px;
    background: #fff;
}

.vm-title {
    display: flex;
    align-items: center;
    height: 35px;
    flex: none;
    background: #fff;
    border-bottom: 1px solid #e4e4e4;
}

.vm-logo {
    width: 24px;
    height: 30px;
    margin: 0 4px 0 5px;
}

.vm-name {
    flex: 1;
    padding-top: 3px;
    font-size: 17px;
    color: #111;
}

.vm-btn {
    display: flex;
    align-items: center;
    justify-content: center;
    width: 71px;
    height: 34px;
}

.vm-min {
    background: #ccc;
}

.vm-dash {
    width: 11px;
    height: 1.500px;
    background: #111;
}

.vm-box {
    width: 11px;
    height: 14px;
    border: 1.500px solid #111;
}

.vm-x {
    font-size: 26px;
    font-weight: 300;
    color: #222;
}

.vm-tools {
    display: flex;
    align-items: center;
    height: 50px;
    flex: none;
    padding-left: 12px;
    background: #fff;
    border-bottom: 2px solid #e8e8e8;
}

.vm-player {
    width: 54px;
    font-size: 17px;
    color: #111;
}

.vm-caret {
    width: 0;
    height: 0;
    margin-left: 6px;
    border-left: 6px solid transparent;
    border-right: 6px solid transparent;
    border-top: 8px solid #111;
}

.vm-caret.grey {
    margin-right: 16px;
    border-top-color: #888;
}

.vm-div {
    width: 1px;
    height: 36px;
    margin: 0 23px 0 5px;
    background: #ddd;
}

.vm-pause {
    width: 20px;
    height: 25px;
    margin-right: 5px;
    border-left: 7px solid #f26322;
    border-right: 7px solid #f26322;
}

.vm-ic {
    width: 26px;
    height: 28px;
    margin-right: 15px;
    fill: none;
    stroke: #555;
    stroke-width: 1.800;
}

.vm-spacer {
    flex: 1;
}

.vm-more {
    margin-right: 11px;
    font-size: 20px;
    color: #445;
}

.vm-dev {
    width: 24px;
    height: 28px;
    margin-right: 14px;
}

.vm-dev:last-child {
    margin-right: 8px;
}

/* kali panels */
.kali-top {
    display: flex;
    align-items: center;
    height: 38px;
    flex: none;
    padding: 1px 0 0 16px;
    background: linear-gradient(90deg, #29354f, #2a3450 50%, #2b4050);
    color: #fff;
}

.kali-pill {
    width: 29px;
    height: 9px;
    margin-right: 8px;
    border-radius: 5px;
    background: #fff;
}

.kali-dot {
    width: 7px;
    height: 7px;
    margin-right: 7px;
    border-radius: 50%;
    background: #9aa3b5;
}

.kali-menu {
    margin-left: 19px;
    font-size: 16px;
    font-weight: 600;
}

.kali-menu + .kali-menu {
    margin-left: 24px;
}

.kali-spacer {
    flex: 1;
}

.kali-person {
    width: 15px;
    height: 22px;
    margin-right: 55px;
    fill: #fff;
}

.kali-clock {
    margin-right: 43px;
    font-size: 16.200px;
    font-weight: 600;
}

.kali-ic {
    width: 18px;
    height: 18px;
    margin-right: 13px;
}

.kali-ic:last-child {
    margin-right: 16px;
}

.ff {
    position: relative;
    display: flex;
    flex-direction: column;
    height: 852px;
    flex: none;
}

.ff-tabs {
    display: flex;
    align-items: center;
    height: 55px;
    flex: none;
    background: #2b2a2a;
    border-bottom: 1px solid #1e1e1e;
    color: #eee;
}

.ff-logo {
    width: 22px;
    height: 26px;
    margin: 0 16px 0 15px;
}

.ff-sep {
    width: 1px;
    height: 100%;
    margin-right: 5px;
    background: #3a3a3a;
}

.ff-tab {
    position: relative;
    display: flex;
    align-items: center;
    width: 276px;
    height: 45px;
    margin-right: 19px;
    padding-left: 11px;
    border-radius: 6px;
    background: #565656;
    overflow: hidden;
}

.ff-favicon {
    width: 19px;
    height: 19px;
    margin-right: 7px;
    flex: none;
}

.ff-tabtext {
    width: 212px;
    flex: none;
    font-size: 17.400px;
    white-space: nowrap;
    -webkit-mask-image: linear-gradient(90deg, #000 175px, transparent 212px);
    mask-image: linear-gradient(90deg, #000 175px, transparent 212px);
}

.ff-tabx {
    margin-left: 1px;
    font-size: 22px;
}

.ff-new {
    font-size: 28px;
    font-weight: 300;
}

.ff-spacer {
    flex: 1;
}

.ff-chev {
    width: 20px;
    height: 20px;
    margin-right: 78px;
    transform: rotate(90deg);
}

.ff-wc {
    width: 10px;
    height: 10px;
    margin-right: 33px;
    color: #fff;
}

.ff-wmin {
    height: 3px;
    margin-top: 8px;
    background: #fff;
}

.ff-wmax {
    margin-right: 30px;
    border: 3px solid #fff;
    background: #333;
}

.ff-wx {
    margin-right: 20px;
    font-size: 24px;
    font-weight: 700;
    line-height: 10px;
}

.ff-nav {
    display: flex;
    align-items: center;
    height: 45px;
    flex: none;
    padding: 4px 0 0 20px;
    background: #525252;
    color: #eee;
}

.ff-btn {
    width: 20px;
    height: 18px;
    margin-right: 25px;
}

.ff-home {
    width: 20px;
    height: 22px;
    margin: 0 152px 0 0;
}

.ff-url {
    display: flex;
    align-items: center;
    width: 1099px;
    height: 40px;
    margin-right: 150px;
    padding-left: 11px;
    border: 1px solid #222;
    border-radius: 5px;
    background: #2d2d2d;
}

.ff-shield {
    width: 18px;
    height: 22px;
    margin-right: 15px;
}

.ff-lock {
    width: 20px;
    height: 22px;
    margin-right: 13px;
}

.ff-addr {
    flex: 1;
    font-size: 18.300px;
    color: #fff;
}

.ff-addr-dim {
    color: #b5b5b5;
}

.ff-star {
    width: 21px;
    height: 21px;
    margin-right: 9px;
}

.ff-tool {
    width: 22px;
    height: 22px;
    margin-right: 23px;
}

.ff-tool + .ff-tool {
    margin-right: 26px;
}

.ff-burger {
    width: 15px;
    height: 14px;
    border-top: 2px solid #eee;
    border-bottom: 2px solid #eee;
    background: linear-gradient(#eee, #eee) center / 100% 2px no-repeat;
}

.ff-marks {
    display: grid;
    grid-template-columns: 118px 120px 113px 137px 162px 128px 198px 1fr;
    align-items: center;
    height: 44px;
    flex: none;
    padding: 7px 0 0 16px;
    background: #525252;
    border-bottom: 2px solid #333;
    font-size: 17.200px;
    color: #e8e8e8;
}

.mark {
    display: flex;
    align-items: center;
    white-space: nowrap;
}

.mark-ic {
    width: 18px;
    height: 20px;
    margin-right: 6px;
    flex: none;
}

/* opnsense */
.opn-head {
    display: flex;
    align-items: center;
    height: 65px;
    flex: none;
    padding-left: 28px;
    background: #3c3c3c;
    border-bottom: 1px solid #222;
    color: #eee;
}

.opn-logo {
    display: flex;
    align-items: flex-end;
    width: 1012px;
    height: 36px;
}

.opn-mark {
    width: 37px;
    height: 35px;
    margin-right: 8px;
}

.opn-word {
    width: 73px;
    font-family: "Lato", sans-serif;
    font-weight: 300;
    font-size: 49px;
    line-height: 36px;
    color: #e8e8e8;
    white-space: nowrap;
    transform: scaleX(.66);
    transform-origin: left bottom;
}

.opn-sense {
    width: 64px;
    font-family: "Liberation Sans", sans-serif;
    font-weight: 700;
    font-size: 33px;
    line-height: 29px;
    color: #d94f00;
    white-space: nowrap;
    transform: scaleX(.68);
    transform-origin: left bottom;
}

.opn-reg {
    align-self: flex-start;
    margin-top: 4px;
    font-size: 8px;
    color: #bbb;
}

.opn-user {
    width: 242px;
    font-family: "Lato", sans-serif;
    font-size: 17px;
}

.opn-dot {
    width: 14px;
    height: 14px;
    margin-right: 25px;
    border-radius: 50%;
    background: #7d7d7d;
}

.opn-search {
    display: flex;
    width: 360px;
    height: 42px;
    border-radius: 2px;
    background: #fff;
}

.opn-search-ic {
    display: flex;
    align-items: center;
    justify-content: center;
    width: 49px;
    background: #eee;
    color: #333;
    border-right: 1px solid #ddd;
}

.opn-body {
    display: flex;
    flex: 1;
    min-height: 0;
    font-family: "Lato", sans-serif;
    font-size: 16.500px;
    color: #333;
}

.side {
    display: flex;
    flex-direction: column;
    width: 284px;
    flex: none;
    overflow: hidden;
    background: #fff;
    border-right: 1px solid #e3e3e3;
}

.side a {
    display: flex;
    align-items: center;
    flex: none;
    border-left: 4px solid #ef9a4b;
    background: #f5f5f5;
    white-space: nowrap;
}

.side .side-top {
    height: 39px;
    padding-left: 7px;
}

.side .side-plain {
    border-left-color: #fff;
    background: #fff;
    color: #555;
}

.side .side-plain:first-child {
    margin-top: -13px;
}

.side .side-open {
    border-left-color: #d94f00;
}

.side-ic {
    width: 18px;
    height: 18px;
    margin-right: 12px;
    color: #444;
}

.side .side-item {
    justify-content: space-between;
    height: 38.600px;
    padding: 0 11px 0 51px;
}

.side-end {
    width: 18px;
    height: 18px;
    color: #444;
}

.side .side-sub {
    height: 36.500px;
    padding-left: 64px;
    font-size: 15px;
}

.side .side-active {
    border-left-color: #d94f00;
    background: #e6e6e6;
}

.side .side-hover {
    border-left-color: #d94f00;
    color: #d94f00;
}

.page {
    display: flex;
    flex-direction: column;
    flex: 1;
    min-width: 0;
    background: #f7f7f7;
}

.page-head {
    display: flex;
    align-items: center;
    justify-content: space-between;
    height: 87px;
    flex: none;
    padding: 0 25px 8px 26px;
    background: #fafafa;
    border-bottom: 1px solid #e9e9e9;
}

.page-title {
    margin: 0;
    font-size: 27.400px;
    font-weight: 700;
    color: #333;
}

.page-select {
    position: relative;
    width: 435px;
    height: 41px;
    margin-top: 15px;
    padding-left: 15px;
    border: 1px solid #e3e3e3;
    border-radius: 2px;
    background: #fff;
    line-height: 40px;
    color: #444;
}

.select-caret {
    position: absolute;
    right: 15px;
    top: 17px;
    border-left: 5px solid transparent;
    border-right: 5px solid transparent;
    border-top: 5px solid #333;
}

.page-content {
    flex: 1;
    padding: 20px 25px 0 26px;
}

.panel {
    width: 1372px;
    background: #fff;
    border: 1px solid #e8e8e8;
}

.rules {
    width: 100%;
    table-layout: fixed;
    border-collapse: collapse;
}

.c-check { width: 34px; }
.c-status { width: 78px; }
.c-if { width: 107px; }
.c-proto { width: 72px; }
.c-saddr { width: 97px; }
.c-sport { width: 70px; }
.c-daddr { width: 138px; }
.c-dport { width: 138px; }
.c-ip { width: 104px; }
.c-nport { width: 70px; }
.c-desc { width: 239px; }

.rules th, .rules td {
    padding: 0;
    border-bottom: 1px solid #e9e9e9;
    text-align: left;
    white-space: nowrap;
}

.rules td {
    padding-bottom: 3px;
}

.rules th {
    font-weight: 700;
    color: #333;
}

.r-group {
    height: 37px;
}

.r-head {
    height: 42px;
}

.r-row {
    height: 42px;
}

.r-first {
    height: 41px;
}

.r-stripe {
    background: #fafafa;
}

.r-off td {
    color: #8a8a8a;
}

.rules td.star {
    padding-bottom: 8px;
}

.rules th:first-child .cb, .rules td:first-child .cb {
    margin-left: 13px;
}

.cb {
    display: block;
    width: 16px;
    height: 16px;
    border: 2px solid #8f8f9d;
    border-radius: 2px;
    background: #fff;
}

.bang {
    width: 6px;
    height: 18px;
    fill: #777;
}

.bang-on {
    fill: #98d370;
}

.rules td .bang {
    display: block;
    margin-left: 16px;
}

.both {
    width: 18px;
    height: 10px;
    fill: #777;
}

.rules td .both {
    display: block;
    margin-left: 45px;
}

.both-on {
    fill: #98d370;
}

.play {
    width: 14px;
    height: 18px;
    fill: #777;
}

.play-on {
    fill: #98d370;
}

.acts {
    display: flex;
    gap: 3.500px;
}

.act {
    display: flex;
    align-items: center;
    justify-content: center;
    width: 28.500px;
    height: 27px;
    border: 1px solid #e6e6e6;
    border-radius: 3px;
    background: #fff;
    color: #4a4a4a;
}

.act-add {
    border-color: #d94f00;
    background: #d94f00;
    color: #fff;
}

.ic {
    width: 16px;
    height: 16px;
}

.ic-s {
    width: 16px;
    height: 16px;
}

.ic-c {
    width: 19px;
    height: 19px;
}

.legend {
    display: grid;
    grid-template-columns: 63px 296px 58px 440px 64px 1fr;
    grid-auto-rows: 25px;
    align-items: center;
    height: 63px;
    padding: 6px 0 0 11px;
    border-bottom: 1px solid #e9e9e9;
}

.alias-row {
    display: flex;
    align-items: center;
    height: 38px;
    padding-left: 9px;
}

.alias-ic {
    width: 18px;
    height: 16px;
    margin-right: 15px;
    fill: #d94f00;
}

.page-foot {
    height: 71px;
    flex: none;
    padding: 25px 0 0 26px;
    background: #fbfbfb;
    border-top: 1px solid #e9e9e9;
    font-size: 13.500px;
    color: #444;
}

.foot-link {
    color: #d94f00;
}

.ff-status {
    position: absolute;
    left: 0;
    bottom: 0;
    height: 29px;
    padding: 0 5px;
    border-top-right-radius: 5px;
    background: #333;
    color: #eee;
    font-size: 17.300px;
    line-height: 29px;
    white-space: nowrap;
}

.kali-bottom {
    display: flex;
    align-items: center;
    justify-content: space-between;
    flex: 1;
    padding: 0 5px 0 3px;
    background: linear-gradient(90deg, #2a3b50, #283a50 50%, #20263f);
}

.kali-task {
    display: flex;
    align-items: center;
    width: 324px;
    height: 32px;
    padding-left: 7px;
    border-radius: 3px;
    background: #c8c8c8;
    color: #333;
    font-size: 15.700px;
    font-weight: 700;
    white-space: nowrap;
}

.kali-task-ic {
    width: 22px;
    height: 26px;
    margin-right: 7px;
}

.kali-ws {
    display: flex;
    gap: 3px;
}

.ws {
    width: 56px;
    height: 33px;
    border: 2px solid #eee;
    border-radius: 3px;
    background: #c9c9c9;
}

.ws-on {
    border-color: #888;
    background: #f5f4f2;
}

/* taskbar */
.taskbar {
    display: flex;
    align-items: center;
    height: 60px;
    flex: none;
    background: #3f403e;
    color: #fff;
}

.tb-start {
    display: flex;
    align-items: center;
    justify-content: center;
    width: 72px;
}

.tb-win {
    width: 24px;
    height: 24px;
    fill: #fff;
}

.tb-search {
    display: flex;
    align-items: center;
    width: 432px;
    height: 60px;
    padding-left: 17px;
    background: #f0f0f0;
    border-bottom: 2px solid #c8c8c8;
    color: #222;
}

.tb-lens {
    width: 26px;
    height: 26px;
    margin-right: 16px;
}

.tb-search-text {
    flex: 1;
    font-size: 21.600px;
}

.tb-art {
    width: 100px;
    height: 50px;
    margin-right: 9px;
}

.tb-view {
    width: 24px;
    height: 28px;
    margin: 0 26px 0 25px;
}

.tb-apps {
    display: flex;
    height: 60px;
}

.tb-app {
    position: relative;
    display: flex;
    align-items: center;
    justify-content: center;
    width: 75px;
    height: 60px;
}

.tb-run::after {
    content: "";
    position: absolute;
    left: 7px;
    right: 7px;
    bottom: 0;
    height: 3px;
    background: #e0a868;
}

.tb-vmw {
    background: #6d6d68;
}

.tb-ic {
    width: 38px;
    height: 38px;
}

.tray {
    display: flex;
    align-items: center;
    flex: 1;
    height: 60px;
    padding-left: 340px;
}

.tray-ic {
    width: 24px;
    height: 24px;
    margin-right: 24px;
}

.tray-lang {
    width: 51px;
    margin-left: -2px;
    font-size: 16.500px;
    color: #eee;
}

.tray-clock {
    display: flex;
    flex-direction: column;
    align-items: center;
    gap: 2px;
    width: 95px;
    font-size: 17.800px;
    color: #eee;
}

.tray-note {
    width: 26px;
    height: 26px;
    margin-left: 30px;
}
```
